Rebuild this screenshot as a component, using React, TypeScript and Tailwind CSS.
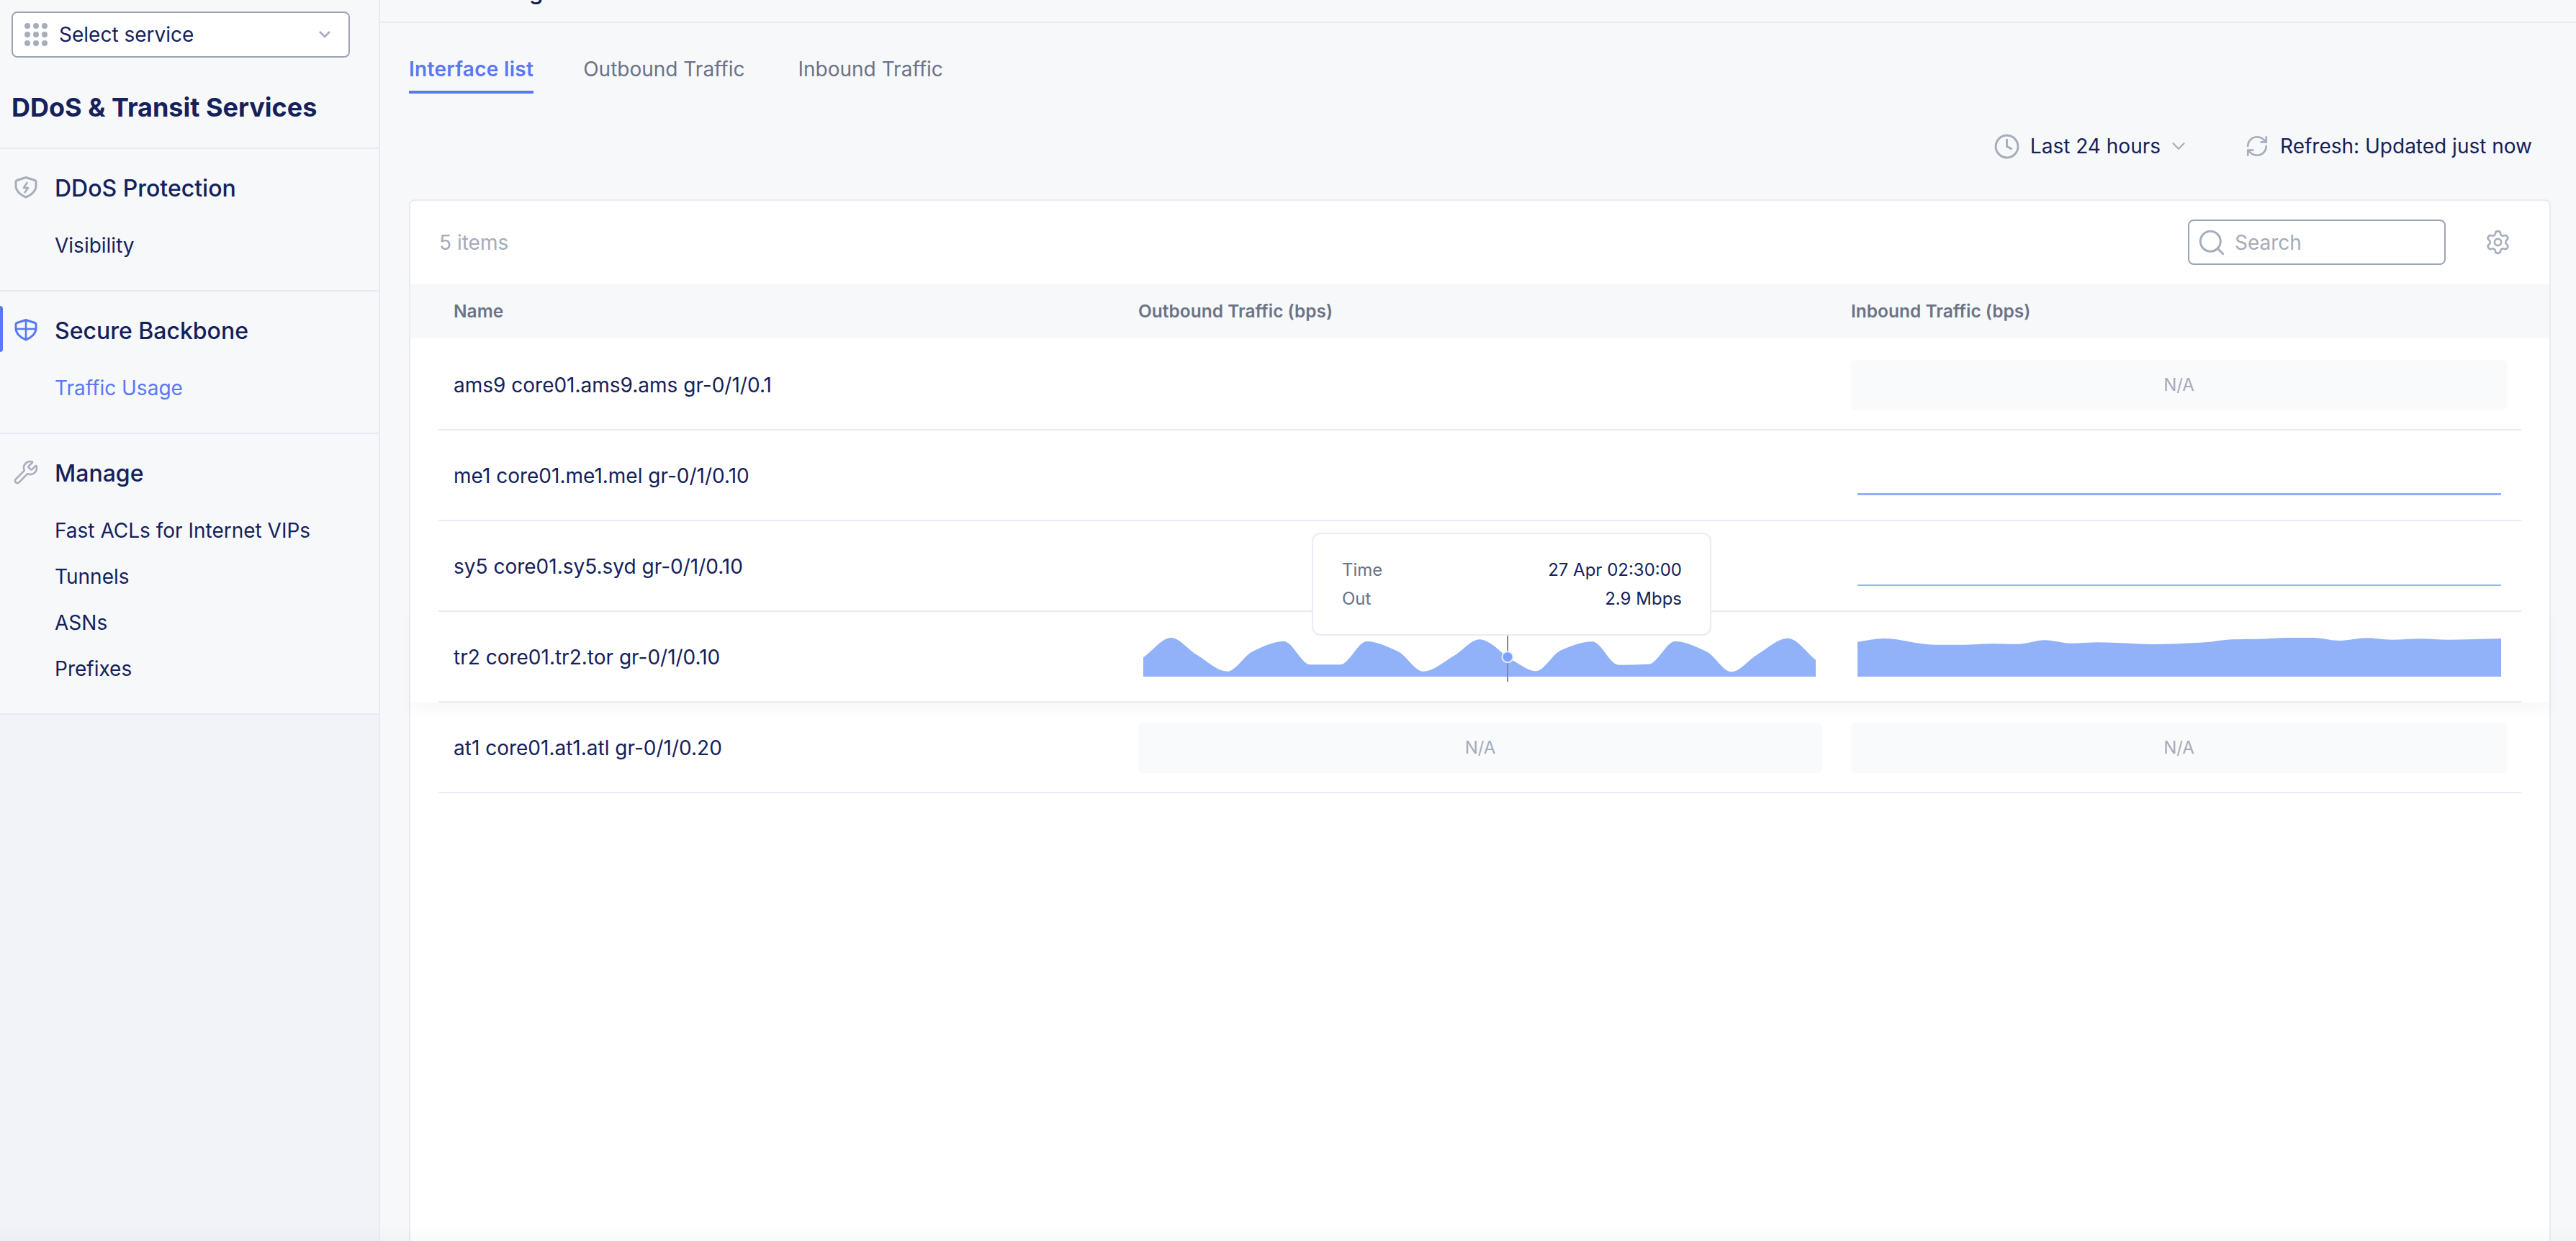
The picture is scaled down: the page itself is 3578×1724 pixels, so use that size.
import React from 'react';
import { ChevronDown, Clock, RefreshCw, Search, Settings, Wrench } from 'lucide-react';

type Pt = [number, number];

// monotone-x curve, same look as the chart lib in the product
const curve = (pts: Pt[]) => {
  const n = pts.length;
  const m = pts.slice(1).map((p, i) => (p[1] - pts[i][1]) / (p[0] - pts[i][0]));
  const t = pts.map((_, i) => {
    if (i === 0) return m[0];
    if (i === n - 1) return m[n - 2];
    return m[i - 1] * m[i] <= 0 ? 0 : (2 * m[i - 1] * m[i]) / (m[i - 1] + m[i]);
  });
  let d = `M${pts[0][0]} ${pts[0][1]}`;
  for (let i = 1; i < n; i++) {
    const h = (pts[i][0] - pts[i - 1][0]) / 3;
    d += `C${pts[i - 1][0] + h} ${pts[i - 1][1] + t[i - 1] * h} ${pts[i][0] - h} ${pts[i][1] - t[i] * h} ${pts[i][0]} ${pts[i][1]}`;
  }
  return d;
};

const outPts: Pt[] = [
  [0, 33.3], [38.7, 6], [73.7, 29.3], [117, 52.7], [152, 25], [195.3, 11], [232, 43.3], [273.7, 43.3],
  [310.3, 11], [353.7, 25], [388.7, 52.7], [432, 30.7], [467, 8.3], [513.7, 37.7], [545.3, 52.3],
  [580.3, 23.3], [623.7, 11.3], [660.3, 43.7], [702, 42.7], [738.7, 11], [782, 25], [817, 53.3],
  [852, 30], [895.3, 6.7], [934, 36.7],
];

const inPts: Pt[] = [
  [0, 11.7], [36.7, 7], [106.7, 15.7], [146.7, 15.7], [186.7, 14.3], [223.3, 14.7], [260, 9.3],
  [296.7, 13.7], [335, 12.3], [410, 15], [483, 12.3], [520, 8.3], [560, 7.7], [596.7, 6], [633, 6],
  [670, 10], [706.7, 6.3], [743, 8.7], [781.7, 7.3], [820, 8.7], [894, 7],
];

const Spark: React.FC<{ pts: Pt[]; width: number; className?: string; children?: React.ReactNode }> = ({
  pts,
  width,
  className,
  children,
}) => (
  <svg width={width} height={60} viewBox={`0 0 ${width} 60`} className={`mt-[30px] overflow-visible ${className ?? ''}`}>
    <path d={`${curve(pts)}L${width} 60L0 60Z`} fill="#91b1f9" />
    {children}
  </svg>
);

const Na: React.FC<{ className: string }> = ({ className }) => (
  <div className={`mt-[28px] flex h-[70px] items-center justify-center rounded-md bg-[#f9fafc] text-[24px] text-[#a5abb7] ${className}`}>
    N/A
  </div>
);

const flat = (width: number, y: number): Pt[] => [
  [0, y],
  [width, y],
];

const ShieldOutline = 'M16 2.5 L28.5 6.5 C29.5 6.8 30 7.5 30 8.5 V14 C30 21 24 27 16 30 C8 27 2 21 2 14 V8.5 C2 7.5 2.5 6.8 3.5 6.5 Z';

const NavGroup: React.FC<{
  icon: React.ReactNode;
  title: string;
  items: string[];
  activeItem?: string;
  active?: boolean;
}> = ({ icon, title, items, activeItem, active }) => (
  <div className="border-b-2 border-[#e8eaf3] bg-[#f7f8fa] pb-[32px] pt-[33px]">
    <div className="relative flex h-[40px] items-center pl-[20px]">
      {active && <div className="absolute -top-[13px] left-0 h-[64px] w-[4px] rounded-r bg-[#5a78f5]" />}
      <div className="flex w-[56px] shrink-0 items-center">{icon}</div>
      <span className="pt-[4px] text-[32px] font-medium text-[#14215a]">{title}</span>
    </div>
    <div className="mt-[27px] flex flex-col">
      {items.map((item) => (
        <div
          key={item}
          className={`flex h-[64px] items-center pl-[76px] pt-[4px] text-[28px] ${item === activeItem ? 'text-[#5a78f5]' : 'text-[#14215a]'}`}
        >
          {item}
        </div>
      ))}
    </div>
  </div>
);

const Sidebar = () => (
  <aside className="flex w-[528px] shrink-0 flex-col border-r-2 border-[#e8eaf3] bg-[#f2f3f8]">
    <div className="h-[207px] border-b-2 border-[#e8eaf3] bg-[#f7f8fa] px-[16px] pt-[16px]">
      <div className="flex h-[64px] w-[470px] items-center rounded-lg border-2 border-[#9ca3b4] bg-white pl-[16px] pr-[24px]">
        <svg width="32" height="32" viewBox="0 0 32 32" fill="#a6adbb" className="shrink-0">
          {[4, 16, 28].map((cy) =>
            [4, 16, 28].map((cx) => <circle key={`${cx}-${cy}`} cx={cx} cy={cy} r="4" />),
          )}
        </svg>
        <span className="ml-[16px] text-[28px] text-[#14215a]">Select service</span>
        <svg width="18" height="12" viewBox="0 0 18 12" fill="none" stroke="#a6adbb" strokeWidth="2.6" className="ml-auto">
          <path d="M2 2l7 7 7-7" />
        </svg>
      </div>
      <div className="mt-[48px] h-[42px] text-[36px] font-bold leading-[42px] text-[#14215a]">DDoS &amp; Transit Services</div>
    </div>
    <NavGroup
      title="DDoS Protection"
      items={['Visibility']}
      icon={
        <svg width="32" height="32" viewBox="0 0 32 32" fill="none" stroke="#a6adbb" strokeWidth="3" strokeLinejoin="round">
          <path d={ShieldOutline} />
          <path d="M18 9l-5 8h6l-5 7" strokeWidth="2.6" />
        </svg>
      }
    />
    <NavGroup
      active
      title="Secure Backbone"
      items={['Traffic Usage']}
      activeItem="Traffic Usage"
      icon={
        <svg width="32" height="32" viewBox="0 0 32 32" fill="none" stroke="#5a78f5" strokeWidth="3" strokeLinejoin="round">
          <path d={ShieldOutline} />
          <path d="M16 3v27M2 15h28" strokeWidth="2.6" />
        </svg>
      }
    />
    <NavGroup
      title="Manage"
      items={['Fast ACLs for Internet VIPs', 'Tunnels', 'ASNs', 'Prefixes']}
      icon={<Wrench size={36} strokeWidth={1.7} color="#a6adbb" className="-ml-[2px]" />}
    />
  </aside>
);

const columns = 'grid grid-cols-[972px_990px_930px]';

type Row = {
  name: string;
  out: 'na' | 'none' | 'wave';
  inb: 'na' | number | 'wave';
};

const rows: Row[] = [
  { name: 'ams9 core01.ams9.ams gr-0/1/0.1', out: 'none', inb: 'na' },
  { name: 'me1 core01.me1.mel gr-0/1/0.10', out: 'none', inb: 57 },
  { name: 'sy5 core01.sy5.syd gr-0/1/0.10', out: 'none', inb: 58 },
  { name: 'tr2 core01.tr2.tor gr-0/1/0.10', out: 'wave', inb: 'wave' },
  { name: 'at1 core01.at1.atl gr-0/1/0.20', out: 'na', inb: 'na' },
];

const Tooltip = () => (
  <div className="absolute -top-[110px] left-[1252px] z-20 flex h-[143px] w-[555px] flex-col justify-center rounded-xl border-2 border-[#e8ecf8] bg-white pl-[40px] pr-[39px] text-[24px]">
    <div className="flex h-[40px] items-center justify-between">
      <span className="text-[#6b7386]">Time</span>
      <span className="text-[#14215a]">27 Apr 02:30:00</span>
    </div>
    <div className="flex h-[40px] items-center justify-between">
      <span className="text-[#6b7386]">Out</span>
      <span className="text-[#14215a]">2.9 Mbps</span>
    </div>
  </div>
);

const TableRow: React.FC<{ row: Row }> = ({ row }) => {
  const hovered = row.out === 'wave';
  return (
    <div className={`px-[39px] ${hovered ? 'relative z-10 bg-white shadow-[0_10px_20px_rgba(0,0,0,0.035)]' : ''}`}>
      {hovered && <Tooltip />}
      <div className={`${columns} h-[126px] border-b-2 border-[#e8ebf3]`}>
        <div className="flex items-center pl-[21px] pt-[2px] text-[28px] text-[#14215a]">{row.name}</div>
        <div>
          {row.out === 'na' && <Na className="w-[950px]" />}
          {row.out === 'wave' && (
            <Spark pts={outPts} width={934} className="ml-[7px]">
              <line x1="506" y1="0" x2="506" y2="67" stroke="#888" strokeWidth="2" />
              <circle cx="506" cy="32.7" r="7.5" fill="#7aa3fb" stroke="#e6edfd" strokeWidth="2" />
            </Spark>
          )}
        </div>
        <div>
          {row.inb === 'na' && <Na className="w-[911px]" />}
          {row.inb === 'wave' && <Spark pts={inPts} width={894} className="ml-[9px]" />}
          {typeof row.inb === 'number' && <Spark pts={flat(894, row.inb)} width={894} className="ml-[9px]" />}
        </div>
      </div>
    </div>
  );
};

const Main = () => (
  <main className="flex min-w-0 flex-1 flex-col bg-[#f7f8fa]">
    <div className="h-[32px] border-b-2 border-[#e8eaf3] pl-[40px]">
      <div className="-mt-[28px] text-[32px] font-medium leading-[32px] text-[#14215a]">Traffic Usage</div>
    </div>
    <div className="flex flex-1 flex-col pl-[40px] pr-[35px]">
      <div className="mt-[44px] flex text-[28px]">
        <div className="h-[54px] border-b-4 border-[#5a78f5] font-semibold leading-[40px] tracking-[0.3px] text-[#5a78f5]">Interface list</div>
        <div className="ml-[69px] leading-[40px] text-[#6b7386]">Outbound Traffic</div>
        <div className="ml-[74px] leading-[40px] text-[#6b7386]">Inbound Traffic</div>
      </div>
      <div className="mt-[57px] flex h-[32px] items-center justify-end pr-[26px] text-[28px] text-[#14215a]">
        <Clock size={37} strokeWidth={1.9} color="#a6adbb" />
        <span className="ml-[14px]">Last 24 hours</span>
        <ChevronDown size={30} strokeWidth={1.8} color="#a6adbb" className="ml-[10px]" />
        <RefreshCw size={34} strokeWidth={1.9} color="#a6adbb" className="ml-[77px]" />
        <span className="ml-[15px]">Refresh: Updated just now</span>
      </div>
      <section className="mt-[58px] flex-1 rounded-t-lg border-x-2 border-t-2 border-[#e9ebf3] bg-white">
        <div className="flex h-[115px] items-center pl-[40px] pr-[53px]">
          <span className="text-[28px] text-[#a5abb7]">5 items</span>
          <div className="ml-auto flex h-[63px] w-[358px] items-center rounded-lg border-2 border-[#9ca3b4] pl-[10px]">
            <Search size={42} strokeWidth={1.7} color="#a6adbb" />
            <span className="ml-[11px] text-[28px] text-[#a5abb7]">Search</span>
          </div>
          <Settings size={37} strokeWidth={1.7} color="#a6adbb" className="ml-[54px]" />
        </div>
        <div className="flex h-[76px] items-center bg-[#f7f8fa] text-[24.5px] font-semibold text-[#6b7386]">
          <div className="w-[1011px] pl-[60px]">Name</div>
          <div className="w-[990px]">Outbound Traffic (bps)</div>
          <div>Inbound Traffic (bps)</div>
        </div>
        <div className="pt-[2px]">
          {rows.map((row) => (
            <TableRow key={row.name} row={row} />
          ))}
        </div>
      </section>
    </div>
  </main>
);

export default function App() {
  return (
    <div className="relative flex h-[1724px] w-[3578px] overflow-hidden font-['Inter',sans-serif]">
      <Sidebar />
      <Main />
      {/* faint fade along the bottom edge of the window */}
      <div className="pointer-events-none absolute inset-x-0 bottom-0 z-30 h-[24px] bg-gradient-to-b from-transparent to-black/[0.02]" />
    </div>
  );
}
